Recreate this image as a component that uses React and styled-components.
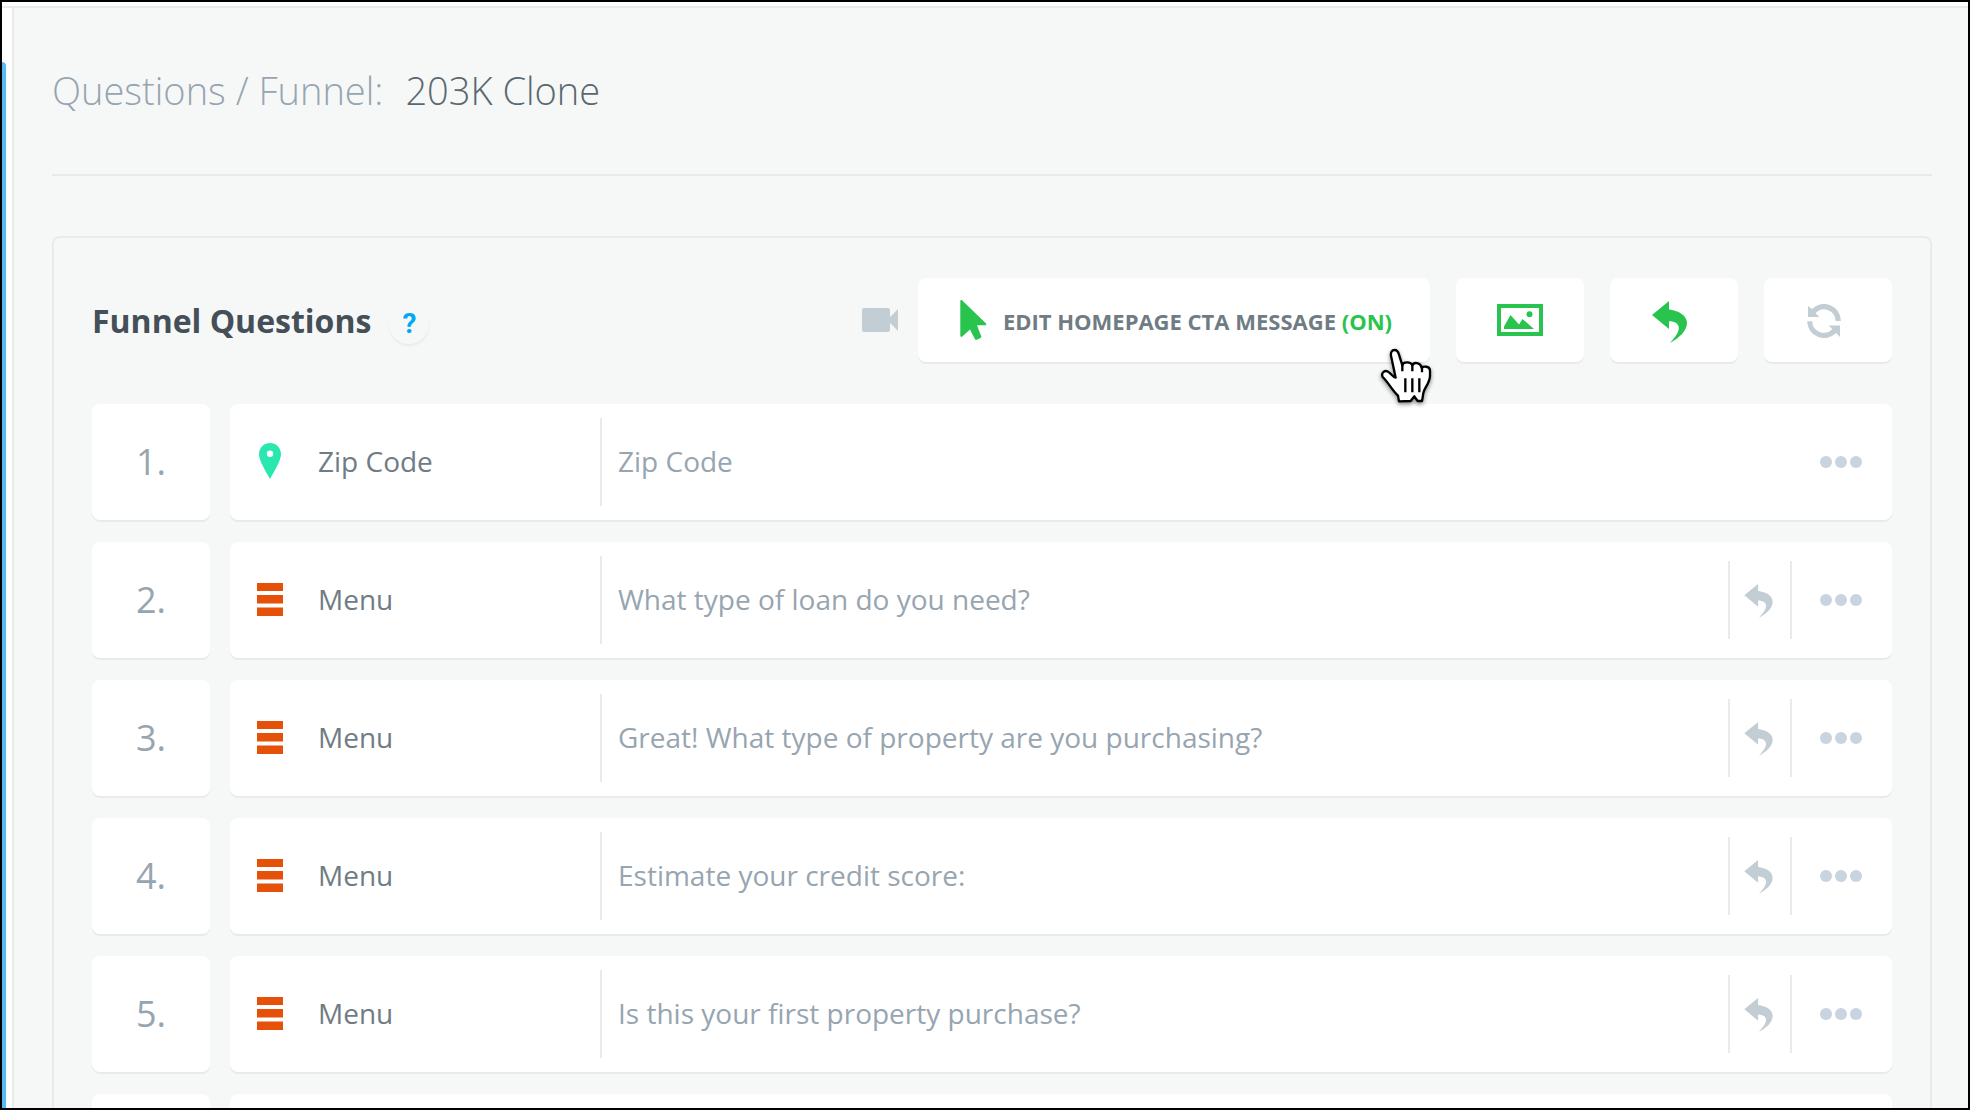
import React from "react";
import styled, { createGlobalStyle } from "styled-components";

const colors = {
  page: "#f6f8f8",
  surface: "#ffffff",
  line: "#e9ebeb",
  shade: "#e9eaea",
  heading: "#444f57",
  name: "#5a6870",
  label: "#6f7c84",
  muted: "#97a5b0",
  icon: "#c3cdd4",
  dots: "#c8d4e0",
  green: "#29c44d",
  orange: "#e55109",
  mint: "#28e8b0",
  blue: "#00a9f4",
  rail: "#52bdf0",
};

const GlobalStyle = createGlobalStyle`
  *, *::before, *::after { box-sizing: border-box; }
  body {
    margin: 0;
    background: ${colors.page};
    font-family: "Open Sans", "Noto Sans", sans-serif;
  }
  button { font-family: inherit; cursor: pointer; }
  svg { display: block; flex: none; }
`;

const Frame = styled.div`
  display: flex;
  flex-direction: column;
  height: 100vh;
  overflow: hidden;
  border: 2px solid #000;
  background: ${colors.surface};
`;

const TopStrip = styled.div`
  flex: none;
  height: 6px;
  border-bottom: 2px solid ${colors.line};
`;

const Body = styled.div`
  display: flex;
  flex: 1;
  min-height: 0;
`;

const Rail = styled.aside`
  display: flex;
  flex: none;
  width: 12px;
  padding-top: 54px;
  border-right: 2px solid ${colors.line};
`;

const RailMarker = styled.div`
  width: 4px;
  border-top-right-radius: 4px;
  background: ${colors.rail};
`;

const Main = styled.main`
  flex: 1;
  min-width: 0;
  padding: 0 36px 0 38px;
  overflow: hidden;
  background: ${colors.page};
`;

const PageHeader = styled.header`
  display: flex;
  align-items: center;
  height: 168px;
  padding-bottom: 2px;
  border-bottom: 2px solid ${colors.line};
`;

const Title = styled.h1`
  display: flex;
  gap: 22px;
  margin: 0;
  font-size: 38px;
  line-height: 52px;
  font-weight: 300;
  color: ${colors.muted};
`;

const FunnelName = styled.span`
  color: ${colors.name};
`;

const Card = styled.section`
  margin-top: 60px;
  padding: 40px 38px;
  border: 2px solid ${colors.line};
  border-radius: 8px;
`;

const Toolbar = styled.div`
  display: flex;
  align-items: center;
  justify-content: space-between;
  margin-bottom: 42px;
`;

const ToolGroup = styled.div`
  display: flex;
  align-items: center;
  gap: ${(p) => p.$gap}px;
`;

const HeadingGroup = styled(ToolGroup)`
  padding-top: 2px;
`;

const CardTitle = styled.h2`
  margin: 0;
  font-size: 32px;
  line-height: 44px;
  font-weight: 700;
  color: ${colors.heading};
`;

const HelpButton = styled.button`
  width: 40px;
  height: 40px;
  margin-top: 6px;
  padding: 0;
  border: 0;
  border-radius: 50%;
  background: ${colors.page};
  box-shadow: 0 2px 2px ${colors.shade};
  font-family: Roboto, sans-serif;
  font-size: 28px;
  line-height: 40px;
  font-weight: 700;
  color: ${colors.blue};
`;

const PlainButton = styled.button`
  display: flex;
  align-items: center;
  justify-content: center;
  width: ${(p) => p.$width}px;
  height: ${(p) => p.$height}px;
  padding: ${(p) => p.$pad || "0"};
  border: 0;
  background: none;
  color: ${(p) => p.$color};
`;

const ToolButton = styled.button`
  position: relative;
  display: flex;
  align-items: center;
  justify-content: center;
  gap: 16px;
  min-width: 128px;
  height: 84px;
  padding: ${(p) => p.$pad || "0"};
  border: 0;
  border-radius: 8px;
  background: ${colors.surface};
  box-shadow: 0 2px 0 ${colors.shade};
  color: ${(p) => p.$color};
`;

const ToolLabel = styled.span`
  padding-top: 2px;
  font-size: 22px;
  line-height: 30px;
  font-weight: 700;
  white-space: nowrap;
  color: ${colors.label};
`;

const State = styled.span`
  color: ${colors.green};
`;

const Pointer = styled.svg`
  position: absolute;
  right: -5px;
  bottom: -45px;
  filter: drop-shadow(0 2px 2px rgba(0, 0, 0, 0.45));
`;

const QuestionList = styled.ol`
  display: flex;
  flex-direction: column;
  gap: 22px;
  margin: 0;
  padding: 0;
  list-style: none;
`;

const Question = styled.li`
  display: grid;
  grid-template-columns: 118px minmax(0, 1fr);
  gap: 20px;
  height: 116px;
`;

const Tile = styled.div`
  display: flex;
  align-items: center;
  border-radius: 8px;
  background: ${colors.surface};
  box-shadow: 0 2px 0 ${colors.shade};
`;

const NumberTile = styled(Tile)`
  justify-content: center;
  font-size: 36px;
  line-height: 48px;
  color: ${colors.muted};
`;

const TypeCell = styled.div`
  display: flex;
  align-items: center;
  gap: 35px;
  width: 372px;
  height: 88px;
  padding: 0 0 2px 27px;
  border-right: 2px solid ${colors.line};
  font-size: 28px;
  line-height: 38px;
  color: ${colors.label};
`;

const TypeIcon = styled.span`
  display: flex;
  justify-content: center;
  width: 26px;
  color: ${(p) => p.$color};
`;

const Prompt = styled.div`
  flex: 1;
  min-width: 0;
  padding: 0 16px 2px;
  font-size: 28px;
  line-height: 38px;
  white-space: nowrap;
  color: ${colors.muted};
`;

const BranchCell = styled.div`
  display: flex;
  justify-content: center;
  width: 64px;
  border: solid ${colors.line};
  border-width: 0 2px;
`;

function ReplyIcon({ width, height }) {
  return (
    <svg width={width} height={height} viewBox="0 0 35 42" fill="currentColor" aria-hidden="true">
      <path d="M0 14 17 0V8.5C26 9.5 35 14 35 22 35 30 27 37 18 42 24 35 26.800 31 26.800 27 26.800 23 23 20.300 17 20.300V28Z" />
    </svg>
  );
}

function VideoIcon() {
  return (
    <svg width="36" height="24" viewBox="3 6 18 12" fill="currentColor" aria-hidden="true">
      <path d="M17 10.500V7c0-.55-.45-1-1-1H4c-.55 0-1 .45-1 1v10c0 .55.45 1 1 1h12c.55 0 1-.45 1-1v-3.500l4 4v-11l-4 4z" />
    </svg>
  );
}

function ArrowIcon() {
  return (
    <svg width="27" height="41" viewBox="0 0 27 41" fill="currentColor" aria-hidden="true">
      <path d="M.3 1.200C.3.200 1.500-.3 2.300.4L26 23.500c.7.700.3 1.800-.7 1.800H17l4.200 10.900c.3.800 0 1.400-.6 1.700l-3.800 1.900c-.8.400-1.500 0-1.800-.6L10 29.500 2.300 36.600c-.8.700-2 .2-2-.8Z" />
    </svg>
  );
}

function ImageIcon() {
  return (
    <svg width="46" height="32" viewBox="0 0 46 32" fill="currentColor" aria-hidden="true">
      <path fillRule="evenodd" d="M0 0H46V32H0ZM4 4V28H42V4Z" />
      <path d="M7 25V22.500L13.500 11 22 20.500 25.500 15 37 25Z" />
      <circle cx="32.500" cy="10.300" r="3" />
    </svg>
  );
}

function RefreshIcon() {
  return (
    <svg width="34" height="34" viewBox="0 0 34 34" fill="currentColor" aria-hidden="true">
      <path d="M1 2 5 5A16.800 16.800 0 0 1 33.800 17H28.600A11.600 11.600 0 0 0 8.500 9.200L12.300 13H1Z" />
      <path d="M33 33 29 29A16.800 16.800 0 0 1 .2 17.300H5.200A11.600 11.600 0 0 0 25.300 25L21.500 21.500H33Z" />
    </svg>
  );
}

function PinIcon() {
  return (
    <svg width="22" height="36" viewBox="0 0 22 36" fill="currentColor" aria-hidden="true">
      <path fillRule="evenodd" d="M11 0C17 0 22 4.800 22 11 22 18 15 28.500 11 36 7 28.500 0 18 0 11 0 4.800 5 0 11 0ZM11 7.600a3.200 3.200 0 1 0 0 6.400 3.200 3.200 0 0 0 0-6.400Z" />
    </svg>
  );
}

function MenuIcon() {
  return (
    <svg width="26" height="33" viewBox="0 0 26 33" fill="currentColor" aria-hidden="true">
      <path d="M0 0H26V8H0ZM0 12H26V20.500H0ZM0 24.500H26V33H0Z" />
    </svg>
  );
}

function DotsIcon() {
  return (
    <svg width="42" height="12" viewBox="0 0 42 12" fill="currentColor" aria-hidden="true">
      <circle cx="6" cy="6" r="6" />
      <circle cx="21" cy="6" r="6" />
      <circle cx="36" cy="6" r="6" />
    </svg>
  );
}

function HandPointer() {
  return (
    <Pointer width="57" height="60" viewBox="717 260 171 180" aria-hidden="true">
      <path
        d="M757 291C753 276 759 269 767 269 774 269 778 275 780 283L790 315C792 304 815 303 820 315 824 304 845 306 848 322 853 317 872 317 873 330V346C873 370 852 385 852 405L849 422H836L826 408 815 422 780 423 777 406C758 388 748 366 731 350 725 338 738 326 750 336 758 342 762 351 770 352Z"
        fill="#fff"
        stroke="#000"
        strokeWidth="7"
        strokeLinejoin="round"
      />
      <path d="M799 354V396M820 354V396M841 354V396" stroke="#000" strokeWidth="7" />
      <path d="M790 311V333M820 312V333M849 320V336" stroke="#000" strokeWidth="7" />
    </Pointer>
  );
}

const types = {
  zip: { label: "Zip Code", color: colors.mint, Icon: PinIcon },
  menu: { label: "Menu", color: colors.orange, Icon: MenuIcon },
};

const questions = [
  { type: "zip", prompt: "Zip Code" },
  { type: "menu", prompt: "What type of loan do you need?", branch: true },
  { type: "menu", prompt: "Great! What type of property are you purchasing?", branch: true },
  { type: "menu", prompt: "Estimate your credit score:", branch: true },
  { type: "menu", prompt: "Is this your first property purchase?", branch: true },
];

function QuestionRow({ number, type, prompt, branch }) {
  const { label, color, Icon } = types[type];
  return (
    <Question>
      <NumberTile>{number}.</NumberTile>
      <Tile>
        <TypeCell>
          <TypeIcon $color={color}>
            <Icon />
          </TypeIcon>
          {label}
        </TypeCell>
        <Prompt>{prompt}</Prompt>
        {branch && (
          <BranchCell>
            <PlainButton
              $width={60}
              $height={78}
              $pad="2px 4px 0 0"
              $color={colors.icon}
              aria-label="Conditional logic"
            >
              <ReplyIcon width={29} height={34} />
            </PlainButton>
          </BranchCell>
        )}
        <PlainButton
          $width={100}
          $height={78}
          $pad="0 2px 0 0"
          $color={colors.dots}
          aria-label="More options"
        >
          <DotsIcon />
        </PlainButton>
      </Tile>
    </Question>
  );
}

export default function App() {
  return (
    <>
      <GlobalStyle />
      <Frame>
        <TopStrip />
        <Body>
          <Rail>
            <RailMarker />
          </Rail>
          <Main>
            <PageHeader>
              <Title>
                <span>Questions / Funnel:</span>
                <FunnelName>203K Clone</FunnelName>
              </Title>
            </PageHeader>
            <Card>
              <Toolbar>
                <HeadingGroup $gap={18}>
                  <CardTitle>Funnel Questions</CardTitle>
                  <HelpButton aria-label="Help">?</HelpButton>
                </HeadingGroup>
                <ToolGroup $gap={20}>
                  <PlainButton $width={36} $height={24} $color={colors.icon} aria-label="Watch video">
                    <VideoIcon />
                  </PlainButton>
                  <ToolGroup $gap={26}>
                    <ToolButton $pad="0 38px 0 42px" $color={colors.green}>
                      <ArrowIcon />
                      <ToolLabel>
                        EDIT HOMEPAGE CTA MESSAGE <State>(ON)</State>
                      </ToolLabel>
                      <HandPointer />
                    </ToolButton>
                    <ToolButton $color={colors.green} aria-label="Background image">
                      <ImageIcon />
                    </ToolButton>
                    <ToolButton $pad="4px 10px 0 0" $color={colors.green} aria-label="Undo">
                      <ReplyIcon width={35} height={42} />
                    </ToolButton>
                    <ToolButton $pad="2px 8px 0 0" $color={colors.icon} aria-label="Reset">
                      <RefreshIcon />
                    </ToolButton>
                  </ToolGroup>
                </ToolGroup>
              </Toolbar>
              <QuestionList>
                {questions.map((question, index) => (
                  <QuestionRow key={question.prompt} number={index + 1} {...question} />
                ))}
                <Question aria-hidden="true">
                  <Tile />
                  <Tile />
                </Question>
              </QuestionList>
            </Card>
          </Main>
        </Body>
      </Frame>
    </>
  );
}
